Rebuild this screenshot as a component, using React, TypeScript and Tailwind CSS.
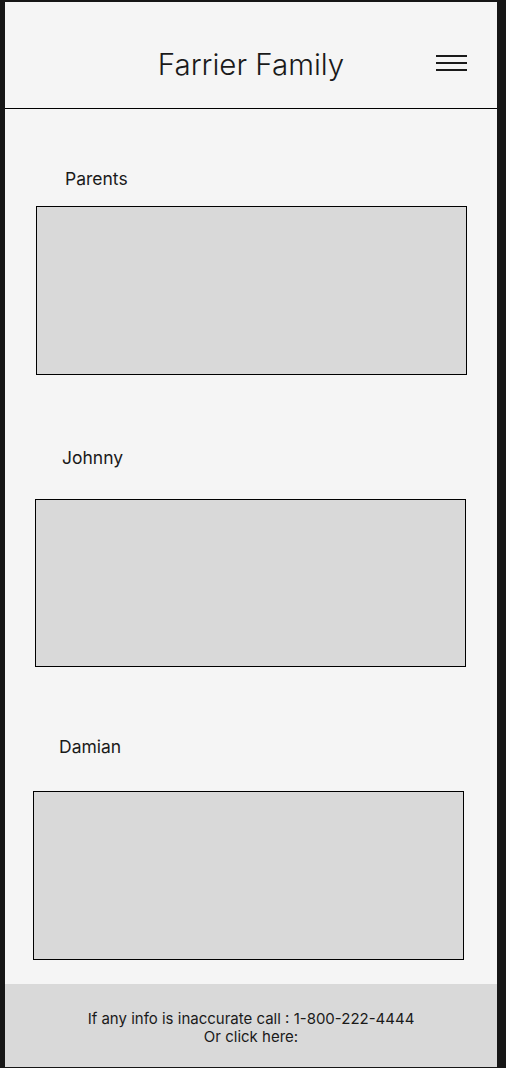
const sections = [
  { name: "Parents", labelClass: "mt-[59px] ml-[60px]", boxClass: "mt-4 ml-[31px] h-[169px]" },
  { name: "Johnny", labelClass: "mt-[72px] ml-[57px]", boxClass: "mt-[30px] ml-[30px] h-[168px]" },
  { name: "Damian", labelClass: "mt-[69px] ml-[54px]", boxClass: "mt-[33px] ml-[28px] h-[169px]" },
];

export default function App() {
  return (
    <div className="h-[1068px] w-[506px] bg-[#161616] pt-[2px] pb-[1px] pl-[5px] pr-[9px] font-['Inter','Liberation_Sans',sans-serif] text-[#1a1a1a]">
      <div className="flex h-full flex-col bg-[#f5f5f5]">
        <header className="grid h-[107px] shrink-0 grid-cols-[1fr_auto_1fr] border-b border-black">
          <div />
          <h1 className="mt-[44px] text-[29.5px] leading-[36px] font-light">Farrier Family</h1>
          <button className="mt-[53px] mr-[30px] flex h-fit w-[31px] flex-col gap-[5px] justify-self-end" aria-label="Menu">
            <span className="h-[2px] w-full bg-[#1a1a1a]" />
            <span className="h-[2px] w-full bg-[#1a1a1a]" />
            <span className="h-[2px] w-full bg-[#1a1a1a]" />
          </button>
        </header>

        <main className="flex flex-1 flex-col">
          {sections.map((s) => (
            <section key={s.name} className="flex flex-col">
              <h2 className={`${s.labelClass} text-[17.5px] leading-[22px]`}>{s.name}</h2>
              <div className={`${s.boxClass} w-[431px] border border-black bg-[#d9d9d9]`} />
            </section>
          ))}
        </main>

        <footer className="h-[83px] shrink-0 bg-[#d9d9d9] pt-[26px] text-center text-[15px] leading-[18px]">
          <p>If any info is inaccurate call : 1-800-222-4444</p>
          <p>Or click here:</p>
        </footer>
      </div>
    </div>
  );
}
